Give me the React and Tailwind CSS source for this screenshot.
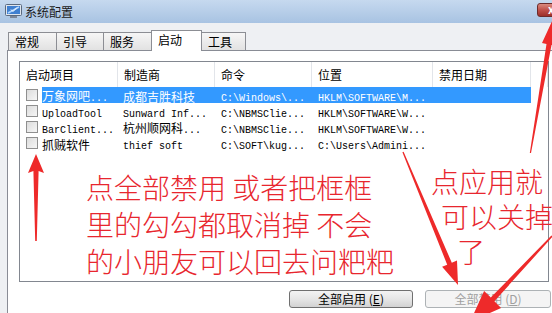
const CJK = /([\u3400-\u9fff]+)/;

function Mixed({ text }) {
  return text.split(CJK).filter(Boolean).map((part, i) =>
    CJK.test(part)
      ? <span key={i} className="text-[12px]" style={{ fontFamily: '"Noto Sans CJK SC", sans-serif' }}>{part}</span>
      : <span key={i} className="text-[10px]" style={{ fontFamily: '"Liberation Mono", monospace' }}>{part}</span>
  );
}

const rows = [
  ['万象网吧...', '成都吉胜科技', 'C:\\Windows\\...', 'HKLM\\SOFTWARE\\M...'],
  ['UploadTool', 'Sunward Inf...', 'C:\\NBMSClie...', 'HKLM\\SOFTWARE\\W...'],
  ['BarClient...', '杭州顺网科...', 'C:\\NBMSClie...', 'HKLM\\SOFTWARE\\W...'],
  ['抓贼软件', 'thief soft', 'C:\\SOFT\\kug...', 'C:\\Users\\Admini...'],
];

const cols = [
  { label: '启动项目', w: 'w-[98px]' },
  { label: '制造商', w: 'w-[97px]' },
  { label: '命令', w: 'w-[97px]' },
  { label: '位置', w: 'w-[121px]' },
  { label: '禁用日期', w: 'w-[98px]' },
];

const tabs = [
  { label: '常规', w: 'w-[49px]' },
  { label: '引导', w: 'w-[48px]' },
  { label: '服务', w: 'w-[49px]' },
  { label: '启动', w: 'w-[51px]', active: true },
  { label: '工具', w: 'w-[45px]' },
];

function Checkbox() {
  return <div className="w-[12px] h-[12px] border border-[#8f8f8f] bg-linear-to-br from-[#dcdcdc] to-[#f6f6f6] shrink-0" />;
}

function Row({ cells, selected }) {
  return (
    <div className="flex h-[16px] items-center">
      <div className="w-[22px] pl-[6px] flex items-center"><Checkbox /></div>
      <div className={`flex h-full items-center w-[489px] ${selected ? 'bg-[#3399ff] text-white' : 'text-black'}`}>
        <div className="w-[76px] whitespace-nowrap overflow-hidden leading-none"><Mixed text={cells[0]} /></div>
        <div className="w-[97px] pl-[5px] whitespace-nowrap overflow-hidden leading-none"><Mixed text={cells[1]} /></div>
        <div className="w-[97px] pl-[6px] whitespace-nowrap overflow-hidden leading-none"><Mixed text={cells[2]} /></div>
        <div className="w-[121px] pl-[6px] whitespace-nowrap overflow-hidden leading-none"><Mixed text={cells[3]} /></div>
      </div>
    </div>
  );
}

function MonitorIcon() {
  return (
    <svg width="17" height="15" viewBox="0 0 17 15">
      <rect x="0.5" y="0.5" width="16" height="11" rx="1" fill="#dfe6ef" stroke="#5a6a80" />
      <rect x="2" y="2" width="13" height="8" fill="#3f7fd0" />
      <path d="M3 9 L14 3" stroke="#a9d3ff" strokeWidth="1.5" />
      <path d="M6 5.5 L8 7.5 L12 3.5" stroke="#ffffff" strokeWidth="1" fill="none" />
      <rect x="5" y="12" width="7" height="2" fill="#7a8597" />
    </svg>
  );
}

export default function App() {
  return (
    <div className="relative w-[552px] h-[313px] overflow-hidden bg-[#eef0f3] flex flex-col" style={{ fontFamily: '"Noto Sans CJK SC", "Noto Sans", sans-serif' }}>
      {/* title bar */}
      <div className="h-[23px] shrink-0 bg-linear-to-b from-[#c6d9ef] to-[#a8c3e2] flex items-center pl-[5px]">
        <MonitorIcon />
        <span className="ml-[3px] text-[12px] text-[#1a1a1a] leading-none">系统配置</span>
        <div className="ml-auto mt-[-4px] w-[28px] h-[14px] -mr-[13px] rounded-[3px] border border-[#6d2b2b] bg-linear-to-b from-[#d98a80] via-[#c0504a] to-[#9c2f2a] flex items-center justify-center text-white text-[11px] font-bold leading-none">x</div>
      </div>

      <div className="flex-1 flex flex-col pl-[7px] pt-[7px]">
        {/* tabs */}
        <div className="h-[20px] flex items-end pl-[1px] relative z-10">
          {tabs.map((t, i) => (
            <div
              key={t.label}
              className={`${t.w} ${i > 0 ? '-ml-px' : ''} border border-b-0 border-[#8c8e94] text-[12px] leading-none flex items-center pl-[6px] ${t.active ? 'h-[21px] bg-white -mb-px pb-[2px] relative z-10' : 'h-[18px] bg-linear-to-b from-[#f6f6f6] to-[#e2e2e2] pt-[1px]'}`}
            >
              {t.label}
            </div>
          ))}
        </div>

        {/* tab page */}
        <div className="flex-1 bg-white border-l border-t border-[#898c95] pl-[11px] pt-[10px]">
          <div className="w-[530px] h-[221px] border border-[#828790] bg-white">
            <div className="flex h-[25px] items-center">
              {cols.map((c) => (
                <div key={c.label} className={`${c.w} h-full pl-[6px] border-r border-[#e2e5ea] flex items-center text-[12px] text-black`}>{c.label}</div>
              ))}
              <div className="w-[17px] h-full border-r border-[#e2e5ea]" />
            </div>
            {rows.map((r, i) => <Row key={i} cells={r} selected={i === 0} />)}
          </div>

          <div className="flex gap-[12px] ml-[270px] mt-[8px]">
            <div className="w-[124px] h-[18px] rounded-[3px] border border-[#707070] bg-linear-to-b from-[#f3f3f3] via-[#e6e6e6] to-[#d2d2d2] flex items-center justify-center text-[12px] leading-none text-black">
              全部启用 (<span className="underline">E</span>)
            </div>
            <div className="w-[126px] h-[18px] rounded-[3px] border border-[#adb2b5] bg-[#f4f4f4] flex items-center justify-center text-[12px] leading-none text-[#a0a0a0]">
              全部禁用 (<span className="underline">D</span>)
            </div>
          </div>
        </div>
      </div>

      {/* annotations */}
      <div className="absolute left-[86px] top-[169px] text-[28px] leading-[37px] font-light text-[#e8262e] whitespace-nowrap">
        <div>点全部禁用 或者把框框</div>
        <div>里的勾勾都取消掉 不会</div>
        <div>的小朋友可以回去问粑粑</div>
      </div>
      <div className="absolute left-[431px] top-[164px] text-[28px] leading-[35px] font-light text-[#e8262e] whitespace-nowrap">
        <div>点应用就</div>
        <div className="pl-[10px]">可以关掉</div>
        <div className="pl-[26px]">了</div>
      </div>

      <svg className="absolute inset-0 pointer-events-none" width="552" height="313" viewBox="0 0 552 313">
        <g fill="#ee2a2a">
          <polygon points="36,154 44,173 38.6,171 36.8,241 35.2,241 33.4,171 28,173" />
          <polygon points="553,19 556,46 551.5,45 531,153 529.8,153 546.5,44 542,43" />
          <polygon points="458,285 457,260.6 451.8,262.7 403.6,151.7 402.4,152.3 447.2,264.7 442.1,266.8" />
          <polygon points="470,322 484.1,290.9 490.8,297.6 551.4,235.4 552.6,236.6 494.4,301.2 501.1,307.9" />
        </g>
      </svg>
    </div>
  );
}
